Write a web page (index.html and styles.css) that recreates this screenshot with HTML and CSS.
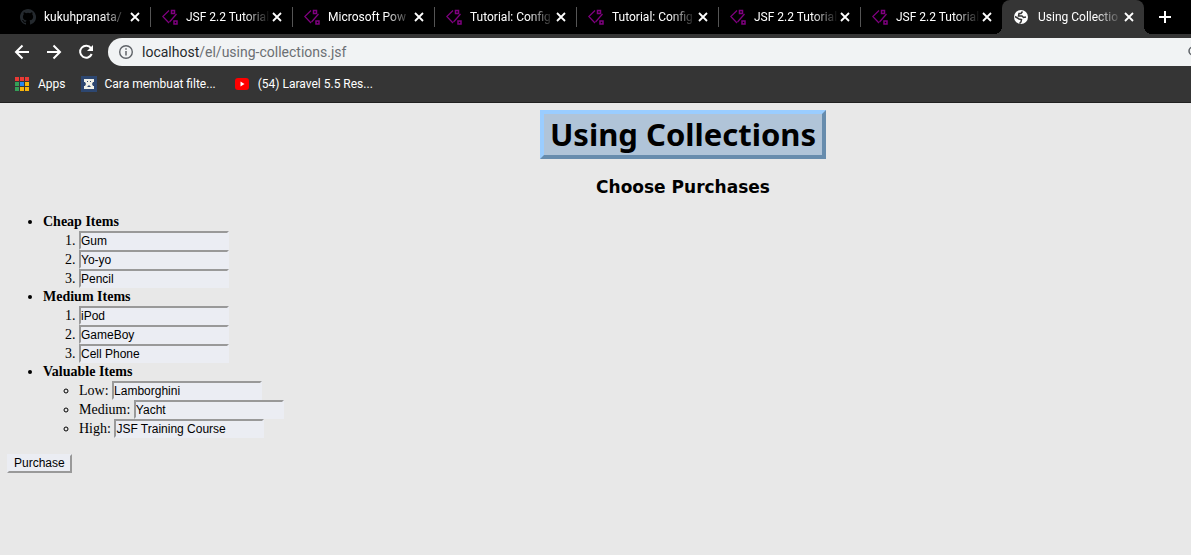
FILE: index.html
```html
<!DOCTYPE html>
<html lang="en">
<head>
<meta charset="utf-8">
<title>Using Collections</title>
<link rel="stylesheet" href="styles.css">
</head>
<body>
<svg class="defs" aria-hidden="true">
  <symbol id="tag" viewBox="0 0 16 16"><path d="M7 1.500.800 7.500 7 14M14.500 5 7.500 13" fill="none" stroke="#800080" stroke-width="1.200"/><path d="M9.500 1.500h3v3h-3zM12 12h3v3h-3z" fill="none" stroke="#800080" stroke-width="1.500"/></symbol>
  <symbol id="close" viewBox="0 0 10 10"><path d="m1 1 8 8m0-8-8 8" fill="none" stroke="#fff" stroke-width="1.800"/></symbol>
</svg>
<header class="browser">
  <nav class="tabs" aria-label="Tabs">
    <div class="tab"><svg class="favicon" viewBox="0 0 16 16"><path fill="#24292e" d="M8 0C3.580 0 0 3.580 0 8c0 3.540 2.290 6.530 5.470 7.590.4.070.55-.17.55-.38v-1.490c-2.010.37-2.530-.49-2.690-.94-.09-.23-.48-.94-.82-1.130-.28-.15-.68-.52-.01-.53.63-.01 1.080.58 1.230.82.72 1.210 1.870.87 2.330.66.07-.52.28-.87.51-1.070-1.780-.2-3.640-.89-3.640-3.950 0-.87.31-1.590.82-2.150-.08-.2-.36-1.020.08-2.120 0 0 .67-.21 2.200.82a7.600 7.600 0 0 1 4 0c1.530-1.040 2.200-.82 2.200-.82.44 1.100.16 1.920.08 2.120.51.56.82 1.270.82 2.150 0 3.070-1.870 3.750-3.650 3.950.29.25.54.73.54 1.480v2.200c0 .21.15.46.55.38A8 8 0 0 0 8 0"/></svg><span class="tab-title">kukuhpranata/</span><button class="close" aria-label="Close tab"><svg><use href="#close"/></svg></button></div>
    <div class="tab"><svg class="favicon"><use href="#tag"/></svg><span class="tab-title">JSF 2.2 Tutorial</span><button class="close" aria-label="Close tab"><svg><use href="#close"/></svg></button></div>
    <div class="tab"><svg class="favicon"><use href="#tag"/></svg><span class="tab-title">Microsoft Pow</span><button class="close" aria-label="Close tab"><svg><use href="#close"/></svg></button></div>
    <div class="tab"><svg class="favicon"><use href="#tag"/></svg><span class="tab-title">Tutorial: Config</span><button class="close" aria-label="Close tab"><svg><use href="#close"/></svg></button></div>
    <div class="tab"><svg class="favicon"><use href="#tag"/></svg><span class="tab-title">Tutorial: Config</span><button class="close" aria-label="Close tab"><svg><use href="#close"/></svg></button></div>
    <div class="tab"><svg class="favicon"><use href="#tag"/></svg><span class="tab-title">JSF 2.2 Tutorial</span><button class="close" aria-label="Close tab"><svg><use href="#close"/></svg></button></div>
    <div class="tab"><svg class="favicon"><use href="#tag"/></svg><span class="tab-title">JSF 2.2 Tutorial</span><button class="close" aria-label="Close tab"><svg><use href="#close"/></svg></button></div>
    <div class="tab active"><svg class="favicon" viewBox="0 0 16 16"><circle cx="7" cy="8" r="7" fill="#fff"/><path d="M8.500 2.500 7 4.500H5L4.500 7H8l1.500 1.500L12 8M1 7.500l4 2.500 2.500.5L7 13l-1.500 1.500" fill="none" stroke="#353535" stroke-width="1.500"/></svg><span class="tab-title">Using Collectio</span><button class="close" aria-label="Close tab"><svg><use href="#close"/></svg></button></div>
    <button class="new-tab" aria-label="New tab"><svg viewBox="0 0 12 12"><path d="M6 0v12M0 6h12" stroke="#fff" stroke-width="2"/></svg></button>
  </nav>
  <div class="toolbar">
    <button class="nav-button" aria-label="Back"><svg viewBox="0 0 16 16"><path d="M15 8H2m6.500-6.500L2 8l6.500 6.500" fill="none" stroke="#fff" stroke-width="2"/></svg></button>
    <button class="nav-button" aria-label="Forward"><svg viewBox="0 0 16 16"><path d="M1 8h13M7.500 1.500 14 8l-6.500 6.500" fill="none" stroke="#fff" stroke-width="2"/></svg></button>
    <button class="nav-button" aria-label="Reload"><svg viewBox="0 0 16 16"><path d="M13 4.200A6 6 0 1 0 13.700 10" fill="none" stroke="#fff" stroke-width="2"/><path d="M15 1v6H9z" fill="#fff"/></svg></button>
    <div class="address">
      <svg class="info" viewBox="0 0 14 14"><circle cx="7" cy="7" r="6.300" fill="none" stroke="#5f6368" stroke-width="1.400"/><path d="M7 6v4.500M7 3.300v1.500" stroke="#5f6368" stroke-width="1.500"/></svg>
      <a class="url" href="#"><span class="host">localhost</span>/el/using-collections.jsf</a>
      <svg class="search" viewBox="0 0 12 12"><circle cx="5" cy="5" r="4" fill="none" stroke="#5f6368" stroke-width="1.500"/></svg>
    </div>
  </div>
  <nav class="bookmarks" aria-label="Bookmarks">
    <a class="bookmark" href="#"><svg viewBox="0 0 14 14"><path fill="#ea3a35" d="M0 0h4v4H0zM5 0h4v4H5zM10 0h4v4h-4z"/><path fill="#34a058" d="M0 5h4v4H0zM0 10h4v4H0z"/><path fill="#2a86f0" d="M5 5h4v4H5z"/><path fill="#f9b50b" d="M10 5h4v4h-4zM5 10h4v4H5zM10 10h4v4h-4z"/></svg>Apps</a>
    <a class="bookmark cara" href="#"><svg viewBox="0 0 16 16"><path fill="#2d4771" d="M0 0h16v16H0z"/><path fill="#f1f1e8" d="M3 3h10v3h-1l-1 2 1 2h1v3H3v-3h1l1-2-1-2H3z"/><path fill="#2d4771" d="M6 5h1v1H6zM9 5h1v1H9zM6 11l2-2 2 2z"/></svg>Cara membuat filte...</a>
    <a class="bookmark" href="#"><svg viewBox="0 0 14 14"><rect y="1" width="14" height="12" rx="3" fill="#f00"/><path fill="#fff" d="m5.500 4.500 4 2.500-4 2.500z"/></svg>(54) Laravel 5.5 Res...</a>
  </nav>
</header>
<main class="page">
  <div class="headings">
    <h1 class="title">Using Collections</h1>
    <h2 class="subtitle">Choose Purchases</h2>
  </div>
  <form>
    <ul class="groups">
      <li><b>Cheap Items</b>
        <ol class="items">
          <li><input aria-label="Cheap item 1" value="Gum"></li>
          <li><input aria-label="Cheap item 2" value="Yo-yo"></li>
          <li><input aria-label="Cheap item 3" value="Pencil"></li>
        </ol>
      </li>
      <li><b>Medium Items</b>
        <ol class="items">
          <li><input aria-label="Medium item 1" value="iPod"></li>
          <li><input aria-label="Medium item 2" value="GameBoy"></li>
          <li><input aria-label="Medium item 3" value="Cell Phone"></li>
        </ol>
      </li>
      <li><b>Valuable Items</b>
        <ul class="items">
          <li><label for="low">Low:</label> <input id="low" value="Lamborghini"></li>
          <li><label for="medium">Medium:</label> <input id="medium" value="Yacht"></li>
          <li><label for="high">High:</label> <input id="high" value="JSF Training Course"></li>
        </ul>
      </li>
    </ul>
    <button class="purchase" type="button">Purchase</button>
  </form>
</main>
</body>
</html>
```
FILE: styles.css
```css
* { box-sizing: border-box; }
body { margin: 0; background: #e8e8e8; color: #000; overflow-x: hidden; }
button { font: inherit; }
.defs { position: absolute; width: 0; height: 0; }

.browser {
  background: #353535;
  border-bottom: 1px solid #202020;
  color: #fff;
  font: 12px/16px Roboto, "Open Sans", sans-serif;
}
.tabs { display: flex; height: 34px; padding-left: 8px; background: #000; overflow: hidden; }
.tab { display: flex; align-items: center; flex: 0 0 142px; padding-left: 12px; position: relative; }
.tab + .tab:not(.active)::before {
  content: "";
  position: absolute;
  left: 0;
  top: 7px;
  height: 20px;
  border-left: 1px solid #555;
}
.tab.active { background: #353535; border-radius: 8px 8px 0 0; }
.tab.active::before, .tab.active::after {
  content: "";
  position: absolute;
  bottom: 0;
  width: 8px;
  height: 8px;
}
.tab.active::before { right: 100%; background: radial-gradient(circle at 0 0, #000 8px, #353535 8px); }
.tab.active::after { left: 100%; background: radial-gradient(circle at 100% 0, #000 8px, #353535 8px); }
.favicon { flex: none; width: 16px; height: 16px; margin-right: 8px; }
.tab-title {
  width: 84px;
  margin-right: 2px;
  white-space: nowrap;
  -webkit-mask-image: linear-gradient(to right, #000 58px, transparent 84px);
  mask-image: linear-gradient(to right, #000 58px, transparent 84px);
}
.close, .new-tab, .nav-button { display: flex; padding: 0; border: 0; background: none; }
.close svg { width: 10px; height: 10px; }
.new-tab { align-items: center; margin-left: 15px; }
.new-tab svg { width: 12px; height: 12px; }

.toolbar { display: flex; align-items: center; gap: 16px; padding: 4px 0 4px 14px; }
.nav-button svg { width: 16px; height: 16px; }
.address {
  display: flex;
  align-items: center;
  flex: 1;
  min-width: 0;
  height: 28px;
  margin-left: -2px;
  padding-left: 11px;
  overflow: hidden;
  border-radius: 14px 0 0 14px;
  background: #f1f3f4;
  font-size: 14px;
}
.info { flex: none; width: 14px; height: 14px; margin-right: 9px; }
.url { color: #6b6f73; text-decoration: none; }
.host { color: #27292c; }
.search { flex: none; width: 12px; height: 12px; margin-left: auto; margin-right: -9px; }

.bookmarks { display: flex; align-items: center; gap: 19px; height: 32px; padding: 0 0 4px 15px; }
.bookmark { display: flex; align-items: center; gap: 9px; color: #fff; text-decoration: none; white-space: nowrap; }
.bookmark svg { width: 14px; height: 14px; }
.bookmark.cara { gap: 8px; margin-left: -4px; }
.bookmark.cara svg { width: 16px; height: 16px; }

.page { padding: 7px; font: 14px/18px "Liberation Serif", "Times New Roman", serif; }
.headings {
  display: flex;
  flex-direction: column;
  align-items: center;
  padding-left: 175px;
  font-family: "DejaVu Sans", Verdana, sans-serif;
}
.title {
  margin: 0;
  padding: 0 6px;
  border: 4px solid;
  border-color: #9acdff #678cad #678cad #9acdff;
  background: #b0c4d8;
  font-family: "Noto Sans", Tahoma, sans-serif;
  font-size: 31px;
  line-height: 41px;
}
.subtitle { margin: 18px 0 16px; font-size: 17px; line-height: 20px; }
.groups, .items { margin: 0; padding-left: 36px; }
.groups { list-style: disc; }
ul.items { list-style: circle; }
.items { line-height: 19px; }
.items input {
  width: 150px;
  height: 19px;
  padding: 0;
  border: 2px solid;
  border-color: #999 #ebedf3 #ebedf3 #999;
  background: #ebedf3;
  font: 12px "Liberation Sans", Arial, sans-serif;
  vertical-align: top;
}
.purchase {
  display: block;
  height: 19px;
  margin-top: 16px;
  padding: 0 5px;
  border: 2px solid;
  border-color: #ebedf3 #999 #999 #ebedf3;
  background: #ebedf3;
  color: #000;
  font: 12px/15px "Liberation Sans", Arial, sans-serif;
}
```
